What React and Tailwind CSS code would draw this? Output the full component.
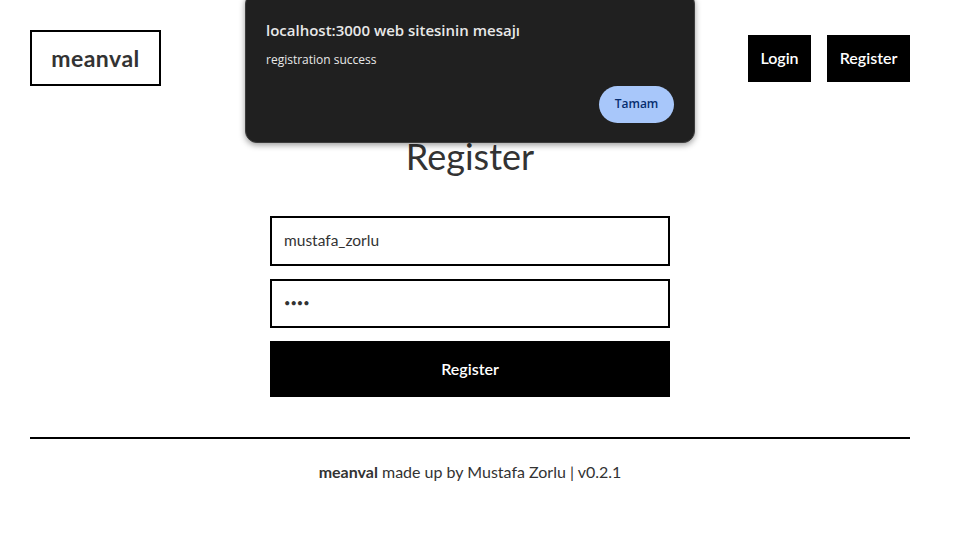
export default function App() {
  const font = { fontFamily: 'Lato, "Open Sans", sans-serif' };
  return (
    <div className="relative min-h-[559px] bg-white" style={font}>
      <div className="ml-[30px] w-[880px] pt-[30px]">
        <header className="flex items-center justify-between">
          <div className="flex h-[56px] w-[131px] items-center justify-center border-2 border-black text-[23px] font-bold tracking-[0.5px] text-[#333]">
            meanval
          </div>
          <div className="flex items-center gap-[16px]">
            <button className="h-[47px] w-[63px] bg-black text-[16px] font-semibold text-white">Login</button>
            <button className="h-[47px] w-[83px] bg-black text-[16px] font-semibold text-white">Register</button>
          </div>
        </header>
        <main className="flex flex-col items-center">
          <h1 className="mt-[48px] text-[36px] leading-[44px] text-[#333]">Register</h1>
          <div className="mt-[38px] flex w-[400px] flex-col gap-[13px]">
            <div className="flex h-[50px] items-center border-2 border-black px-[12px] text-[15.5px] text-[#333]">mustafa_zorlu</div>
            <div className="flex h-[49px] items-center border-2 border-black px-[12px] text-[11px] tracking-[0px] text-[#333]">••••</div>
            <button className="h-[56px] bg-black text-[16px] font-semibold text-white">Register</button>
          </div>
        </main>
        <div className="mt-[40px] h-[2px] bg-black" />
        <footer className="mt-[21px] text-center text-[16px] text-[#333]">
          <span className="font-bold">meanval</span> made up by Mustafa Zorlu | v0.2.1
        </footer>
      </div>

      <div
        className="absolute left-[245px] top-[-8px] h-[151px] w-[450px] rounded-[12px] border border-[#3c3c3c] bg-[#202020] shadow-[0_2px_6px_rgba(0,0,0,0.4)]"
        style={{ fontFamily: '"Open Sans", "Noto Sans", sans-serif' }}
      >
        <div className="pl-[20px] pt-[26px] text-[15px] font-semibold text-[#e8e8e8]">localhost:3000 web sitesinin mesajı</div>
        <div className="pl-[20px] pt-[9px] text-[12px] text-[#e8e8e8]">registration success</div>
        <div className="flex justify-end pr-[20px] pt-[17px]">
          <button className="h-[37px] w-[75px] rounded-full bg-[#a8c7fa] text-[12px] font-semibold text-[#062e6f]">Tamam</button>
        </div>
      </div>
    </div>
  );
}
